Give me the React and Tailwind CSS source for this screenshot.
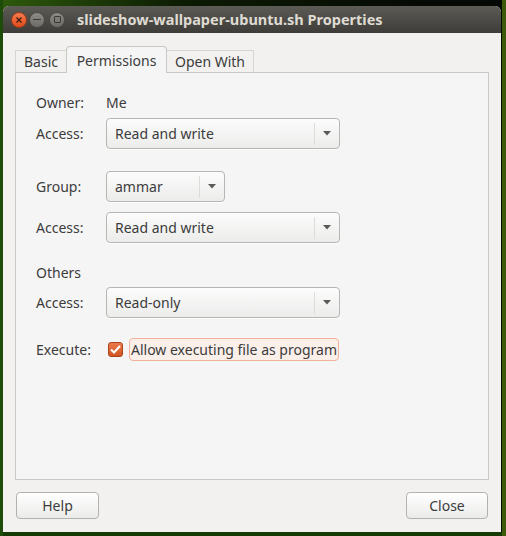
import React from "react";

const font = { fontFamily: '"Noto Sans", "DejaVu Sans", sans-serif' };

function Combo({ value, width }) {
  return (
    <div
      className={`flex h-[31px] items-center rounded-[4px] border border-[#b6b6b2] bg-gradient-to-b from-[#fcfcfc] to-[#ececeb] shadow-[0_1px_0_rgba(255,255,255,0.8)] ${width}`}
    >
      <span className="flex-1 pl-[8px] text-[14px] text-[#3c3c3c]">{value}</span>
      <div className="h-[22px] w-px bg-[#dcdcd8]" />
      <div className="flex w-[24px] items-center justify-center">
        <svg width="8" height="5" viewBox="0 0 8 5">
          <path d="M0 0 H8 L4 4.5 Z" fill="#5a5a58" />
        </svg>
      </div>
    </div>
  );
}

function Row({ label, children, className = "" }) {
  return (
    <div className={`flex items-center ${className}`}>
      <div className="w-[70px] text-[14px] text-[#3c3c3c]">{label}</div>
      {children}
    </div>
  );
}

export default function App() {
  return (
    <div
      style={font}
      className="h-[536px] w-[506px] bg-[linear-gradient(90deg,#1e4a0a_0px,#1e4a0a_3px,transparent_3px,transparent_502px,#3d5a0a_502px),linear-gradient(0deg,#163a06_0px,#163a06_4px,transparent_4px),radial-gradient(circle_at_0%_0%,#2d5a0c_0%,#0c1a03_25%,#050805_60%)] pb-[4px] pl-[3px] pr-[5px] pt-[6px]"
    >
      <div className="flex h-full flex-col overflow-hidden rounded-t-[6px] bg-[#f2f1f0]">
        {/* barra de título */}
        <div className="flex h-[27px] items-center bg-gradient-to-b from-[#5c5b56] to-[#3d3c38] pl-[8px]">
          <div className="flex h-[16px] w-[16px] items-center justify-center rounded-full border border-[#9a3a1a] bg-gradient-to-b from-[#f27b4e] to-[#df4a17]">
            <svg width="6" height="6" viewBox="0 0 6 6">
              <path d="M0.5 0.5 L5.5 5.5 M5.5 0.5 L0.5 5.5" stroke="#3a1a0c" strokeWidth="1.2" />
            </svg>
          </div>
          <div className="ml-[2px] flex h-[16px] w-[16px] items-center justify-center rounded-full border border-[#4a4945] bg-gradient-to-b from-[#8e8c86] to-[#6d6b66]">
            <div className="h-[1.5px] w-[8px] bg-[#3a3936]" />
          </div>
          <div className="ml-[4px] flex h-[16px] w-[16px] items-center justify-center rounded-full border border-[#4a4945] bg-gradient-to-b from-[#8e8c86] to-[#6d6b66]">
            <div className="h-[7px] w-[7px] rounded-[1px] border border-[#3a3936]" />
          </div>
          <span className="ml-[12px] text-[14.5px] font-bold text-[#dfdbd2]">
            slideshow-wallpaper-ubuntu.sh Properties
          </span>
        </div>

        {/* cuerpo */}
        <div className="flex flex-1 flex-col px-[12px] pt-[13px]">
          {/* pestañas */}
          <div className="flex h-[26px] items-end">
            <div className="flex h-[22px] w-[51px] items-center justify-center border-l border-t border-[#d6d5d2] text-[14px] text-[#3c3c3c]">
              Basic
            </div>
            <div className="relative z-10 -mb-px flex h-[27px] w-[101px] items-center justify-center rounded-t-[4px] border border-b-0 border-[#c9c8c5] bg-[#f5f5f5] text-[14px] text-[#3c3c3c]">
              Permissions
            </div>
            <div className="flex h-[22px] w-[87px] items-center justify-center border-r border-t border-[#d6d5d2] text-[14px] text-[#3c3c3c]">
              Open With
            </div>
          </div>

          {/* contenido del cuaderno */}
          <div className="flex h-[408px] flex-col border border-[#c9c8c5] bg-[#f5f5f5] pl-[20px]">
            <Row label="Owner:" className="mt-[19px] h-[20px]">
              <span className="text-[14px] text-[#3c3c3c]">Me</span>
            </Row>
            <Row label="Access:" className="mt-[6px]">
              <Combo value="Read and write" width="w-[234px]" />
            </Row>

            <Row label="Group:" className="mt-[22px]">
              <Combo value="ammar" width="w-[119px]" />
            </Row>
            <Row label="Access:" className="mt-[10px]">
              <Combo value="Read and write" width="w-[234px]" />
            </Row>

            <div className="mt-[19px] flex h-[20px] items-center text-[14px] text-[#3c3c3c]">
              Others
            </div>
            <Row label="Access:" className="mt-[5px]">
              <Combo value="Read-only" width="w-[234px]" />
            </Row>

            <Row label="Execute:" className="mt-[20px] h-[23px]">
              <div className="ml-[2px] flex h-[15px] w-[15px] items-center justify-center rounded-[3px] border border-[#a8441c] bg-gradient-to-b from-[#ec7a4c] to-[#d0561f]">
                <svg width="11" height="9" viewBox="0 0 11 9">
                  <path d="M1 4.5 L4 7.5 L10 1" fill="none" stroke="#ffffff" strokeWidth="2" />
                </svg>
              </div>
              <div className="ml-[6px] flex h-[23px] items-center rounded-[4px] border border-[#f2b299] bg-[#fbefea] px-[1px] text-[14px] text-[#3c3c3c]">
                Allow executing file as program
              </div>
            </Row>
          </div>

          {/* botones */}
          <div className="mt-[12px] flex justify-between pl-[1px] pr-[1px]">
            <button className="h-[27px] w-[83px] rounded-[4px] border border-[#b2b2ae] bg-gradient-to-b from-[#ffffff] to-[#ebebea] text-[14px] text-[#3c3c3c]">
              Help
            </button>
            <button className="h-[27px] w-[82px] rounded-[4px] border border-[#b2b2ae] bg-gradient-to-b from-[#ffffff] to-[#ebebea] text-[14px] text-[#3c3c3c]">
              Close
            </button>
          </div>
        </div>
      </div>
    </div>
  );
}
